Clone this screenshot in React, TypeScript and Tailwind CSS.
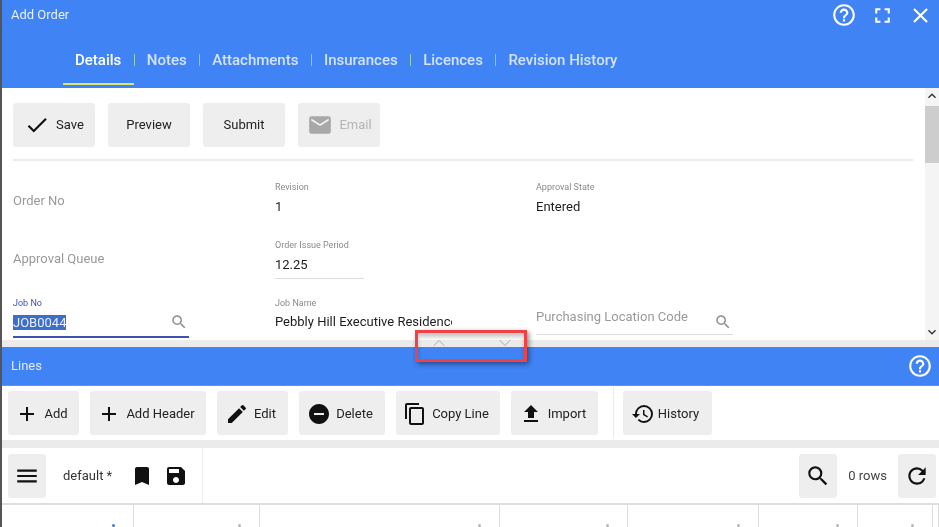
import {
  MdAdd,
  MdBookmark,
  MdCheck,
  MdClose,
  MdContentCopy,
  MdEdit,
  MdEmail,
  MdFileUpload,
  MdFullscreen,
  MdHelpOutline,
  MdHistory,
  MdKeyboardArrowDown,
  MdKeyboardArrowUp,
  MdMenu,
  MdRefresh,
  MdRemoveCircle,
  MdSave,
  MdSearch,
} from "react-icons/md";
import { ChevronDown, ChevronUp } from "lucide-react";

const tabs = ["Details", "Notes", "Attachments", "Insurances", "Licences", "Revision History"];

const lineActions = [
  { icon: MdAdd, label: "Add", width: "w-[71px]" },
  { icon: MdAdd, label: "Add Header", width: "w-[116px]" },
  { icon: MdEdit, label: "Edit", width: "w-[71px]" },
  { icon: MdRemoveCircle, label: "Delete", width: "w-[86px]" },
  { icon: MdContentCopy, label: "Copy Line", width: "w-[104px]" },
  { icon: MdFileUpload, label: "Import", width: "w-[87px]" },
];

const columnWidths = ["w-[132px]", "w-[126px]", "w-[240px]", "w-[128px]", "w-[131px]", "w-[99px]", "w-[75px]", "flex-1"];

const ReadField = ({ label, value }: { label: string; value: string }) => (
  <div className="flex flex-col pt-[4px]">
    <span className="text-[9px] leading-[12px] text-[#8a8a8a]">{label}</span>
    <span className="mt-[6px] text-[13px] leading-[16px] text-[#1c1c1c]">{value}</span>
  </div>
);

const EmptyField = ({ label }: { label: string }) => (
  <div className="pt-[15px] text-[13px] leading-[18px] text-[#9a9a9a]">{label}</div>
);

export default function App() {
  return (
    <div className="relative flex h-[527px] w-[939px] flex-col overflow-hidden border-l-2 border-[#555] bg-white font-['Roboto',sans-serif] blur-[0.6px]">
      {/* Order header */}
      <div className="flex h-[88px] shrink-0 flex-col bg-[#4083f5] text-white">
        <div className="flex h-[30px] items-center justify-between pl-[9px] pr-[6px]">
          <span className="text-[13px] text-[#e8f0ff]">Add Order</span>
          <div className="flex items-center gap-[13px]">
            <MdHelpOutline size={26} />
            <MdFullscreen size={25} />
            <MdClose size={25} />
          </div>
        </div>
        <div className="mt-[16px] flex h-[42px] items-start pl-[60.75px]">
          {tabs.map((tab, i) => (
            <div key={tab} className="flex h-full items-start">
              <div
                className={`flex h-[39px] items-start border-b-2 px-[12.25px] pt-[5px] text-[15px] font-medium leading-[18px] ${
                  i === 0 ? "border-[#dbe86a] text-white" : "border-transparent text-[#d3e2fd]"
                }`}
              >
                {tab}
              </div>
              {i < tabs.length - 1 && <div className="mt-[8px] h-[12px] w-px bg-[#8fd0b0]" />}
            </div>
          ))}
        </div>
      </div>

      {/* Order form */}
      <div className="flex h-[252px] shrink-0">
        <div className="flex min-w-0 flex-1 flex-col pl-[11px] pr-[11px] pt-[15px]">
          <div className="flex gap-[13px]">
            <button className="flex h-[44px] w-[82px] items-center justify-center gap-[6px] rounded-[3px] bg-[#eeeeee] text-[13px] text-[#222]">
              <MdCheck size={26} className="text-[#111]" />
              Save
            </button>
            <button className="h-[44px] w-[82px] rounded-[3px] bg-[#eeeeee] text-[13px] text-[#222]">Preview</button>
            <button className="h-[44px] w-[82px] rounded-[3px] bg-[#eeeeee] text-[13px] text-[#222]">Submit</button>
            <button className="flex h-[44px] w-[82px] items-center justify-center gap-[6px] rounded-[3px] bg-[#eeeeee] pl-[1px] text-[13px] text-[#b5b5b5]">
              <MdEmail size={26} className="text-[#a8a8a8]" />
              Email
            </button>
          </div>
          <div className="mt-[12px] h-[2px] w-[900px] bg-[#ececec]" />
          <div className="grid grid-cols-[262px_261px_1fr] grid-rows-[58px_58px_47px] pt-[16px]">
            <EmptyField label="Order No" />
            <ReadField label="Revision" value="1" />
            <ReadField label="Approval State" value="Entered" />

            <EmptyField label="Approval Queue" />
            <div className="w-[89px]">
              <ReadField label="Order Issue Period" value="12.25" />
              <div className="mt-[5px] h-px bg-[#dcdcdc]" />
            </div>
            <div />

            <div className="flex w-[176px] flex-col pt-[4px]">
              <span className="text-[9px] leading-[12px] text-[#3f51b5]">Job No</span>
              <div className="mt-[4px] flex items-center justify-between">
                <span className="w-[53px] overflow-hidden whitespace-nowrap bg-[#3b6fc9] text-[13px] leading-[15px] text-[#e8efff]">
                  JOB0044
                </span>
                <MdSearch size={18} className="mr-[1px] text-[#8c8c8c]" />
              </div>
              <div className="mt-[5px] h-[2px] bg-[#3f51b5]" />
            </div>
            <div className="flex flex-col pt-[4px]">
              <span className="text-[9px] leading-[12px] text-[#8a8a8a]">Job Name</span>
              <span className="mt-[5px] w-[177px] overflow-hidden whitespace-nowrap text-[13px] leading-[16px] text-[#1c1c1c]">
                Pebbly Hill Executive Residence
              </span>
            </div>
            <div className="w-[197px]">
              <div className="flex items-start justify-between pt-[15px]">
                <span className="text-[13px] leading-[18px] text-[#9a9a9a]">Purchasing Location Code</span>
                <MdSearch size={18} className="mr-[1px] mt-[5px] text-[#8c8c8c]" />
              </div>
              <div className="mt-[3px] h-px bg-[#dcdcdc]" />
            </div>
          </div>
        </div>

        {/* Scrollbar */}
        <div className="flex w-[14px] shrink-0 flex-col items-center bg-[#f4f4f4]">
          <MdKeyboardArrowUp size={16} className="text-[#333]" />
          <div className="mt-[2px] h-[57px] w-full bg-[#cdcdcd]" />
          <div className="flex-1" />
          <MdKeyboardArrowDown size={16} className="text-[#333]" />
        </div>
      </div>

      <div className="h-[7px] shrink-0 bg-[#ebebeb]" />

      {/* Lines bar */}
      <div className="flex h-[39px] shrink-0 items-center justify-between border-b border-[#5c95f5] bg-[#4083f5] pl-[9px] pr-[6px] text-white">
        <span className="text-[13px] text-[#dfeaff]">Lines</span>
        <MdHelpOutline size={26} />
      </div>

      {/* Lines toolbar */}
      <div className="flex h-[54px] shrink-0 items-center gap-[11px] pl-[6px]">
        {lineActions.map((action) => (
          <button
            key={action.label}
            className={`flex h-[44px] items-center justify-center gap-[5px] rounded-[3px] bg-[#eeeeee] pr-[4px] pt-[1px] text-[13px] text-[#222] ${action.width}`}
          >
            <action.icon size={24} className="shrink-0 text-[#111]" />
            {action.label}
          </button>
        ))}
        <div className="ml-[4px] h-[52px] w-px bg-[#ececec]" />
        <button className="-ml-[2px] flex h-[44px] w-[89px] items-center justify-center gap-[3px] rounded-[3px] bg-[#eeeeee] pr-[5px] pt-[1px] text-[13px] text-[#222]">
          <MdHistory size={24} className="shrink-0 text-[#111]" />
          History
        </button>
      </div>

      <div className="h-[8px] shrink-0 bg-[#ebebeb]" />

      {/* Grid toolbar */}
      <div className="flex h-[57px] shrink-0 items-center border-b-2 border-[#dedede] pl-[6px] pr-[3px]">
        <div className="flex h-full w-[195px] items-center border-r border-[#efefef]">
          <button className="flex h-[44px] w-[38px] items-center justify-center rounded-[3px] bg-[#eeeeee]">
            <MdMenu size={26} className="text-[#111]" />
          </button>
          <span className="ml-[17px] pt-[1px] text-[13px] text-[#333]">default *</span>
          <MdBookmark size={24} className="ml-[18px] text-[#111]" />
          <MdSave size={24} className="ml-[10px] text-[#111]" />
        </div>
        <div className="flex-1" />
        <button className="flex h-[44px] w-[38px] items-center justify-center rounded-[3px] bg-[#eeeeee]">
          <MdSearch size={26} className="text-[#111]" />
        </button>
        <span className="ml-[11px] mr-[11px] pt-[1px] text-[13px] text-[#444]">0 rows</span>
        <button className="flex h-[44px] w-[38px] items-center justify-center rounded-[3px] bg-[#eeeeee]">
          <MdRefresh size={26} className="text-[#111]" />
        </button>
      </div>

      {/* Grid header */}
      <div className="flex min-h-0 flex-1">
        {columnWidths.map((width, i) => (
          <div key={width} className={`relative h-full border-r border-[#dedede] ${width}`}>
            {i < columnWidths.length - 1 && (
              <span
                className={`absolute bottom-0 right-[18px] h-[3px] w-[3px] rounded-full ${
                  i === 0 ? "bg-[#2f7bf0]" : "bg-[#b5b5b5]"
                }`}
              />
            )}
          </div>
        ))}
      </div>

      {/* Annotation over the splitter */}
      <div className="absolute left-[413px] top-[330px] h-[32px] w-[112px] border-[3px] border-[#ef4146] shadow-[2px_2px_5px_rgba(0,0,0,0.45),inset_0_4px_4px_rgba(0,0,0,0.22)]">
        <ChevronUp size={20} strokeWidth={1} className="absolute left-[11px] top-[0px] text-[#9a9a9a]" />
        <ChevronDown size={20} strokeWidth={1} className="absolute left-[77px] top-[0px] text-[#9a9a9a]" />
      </div>
    </div>
  );
}
